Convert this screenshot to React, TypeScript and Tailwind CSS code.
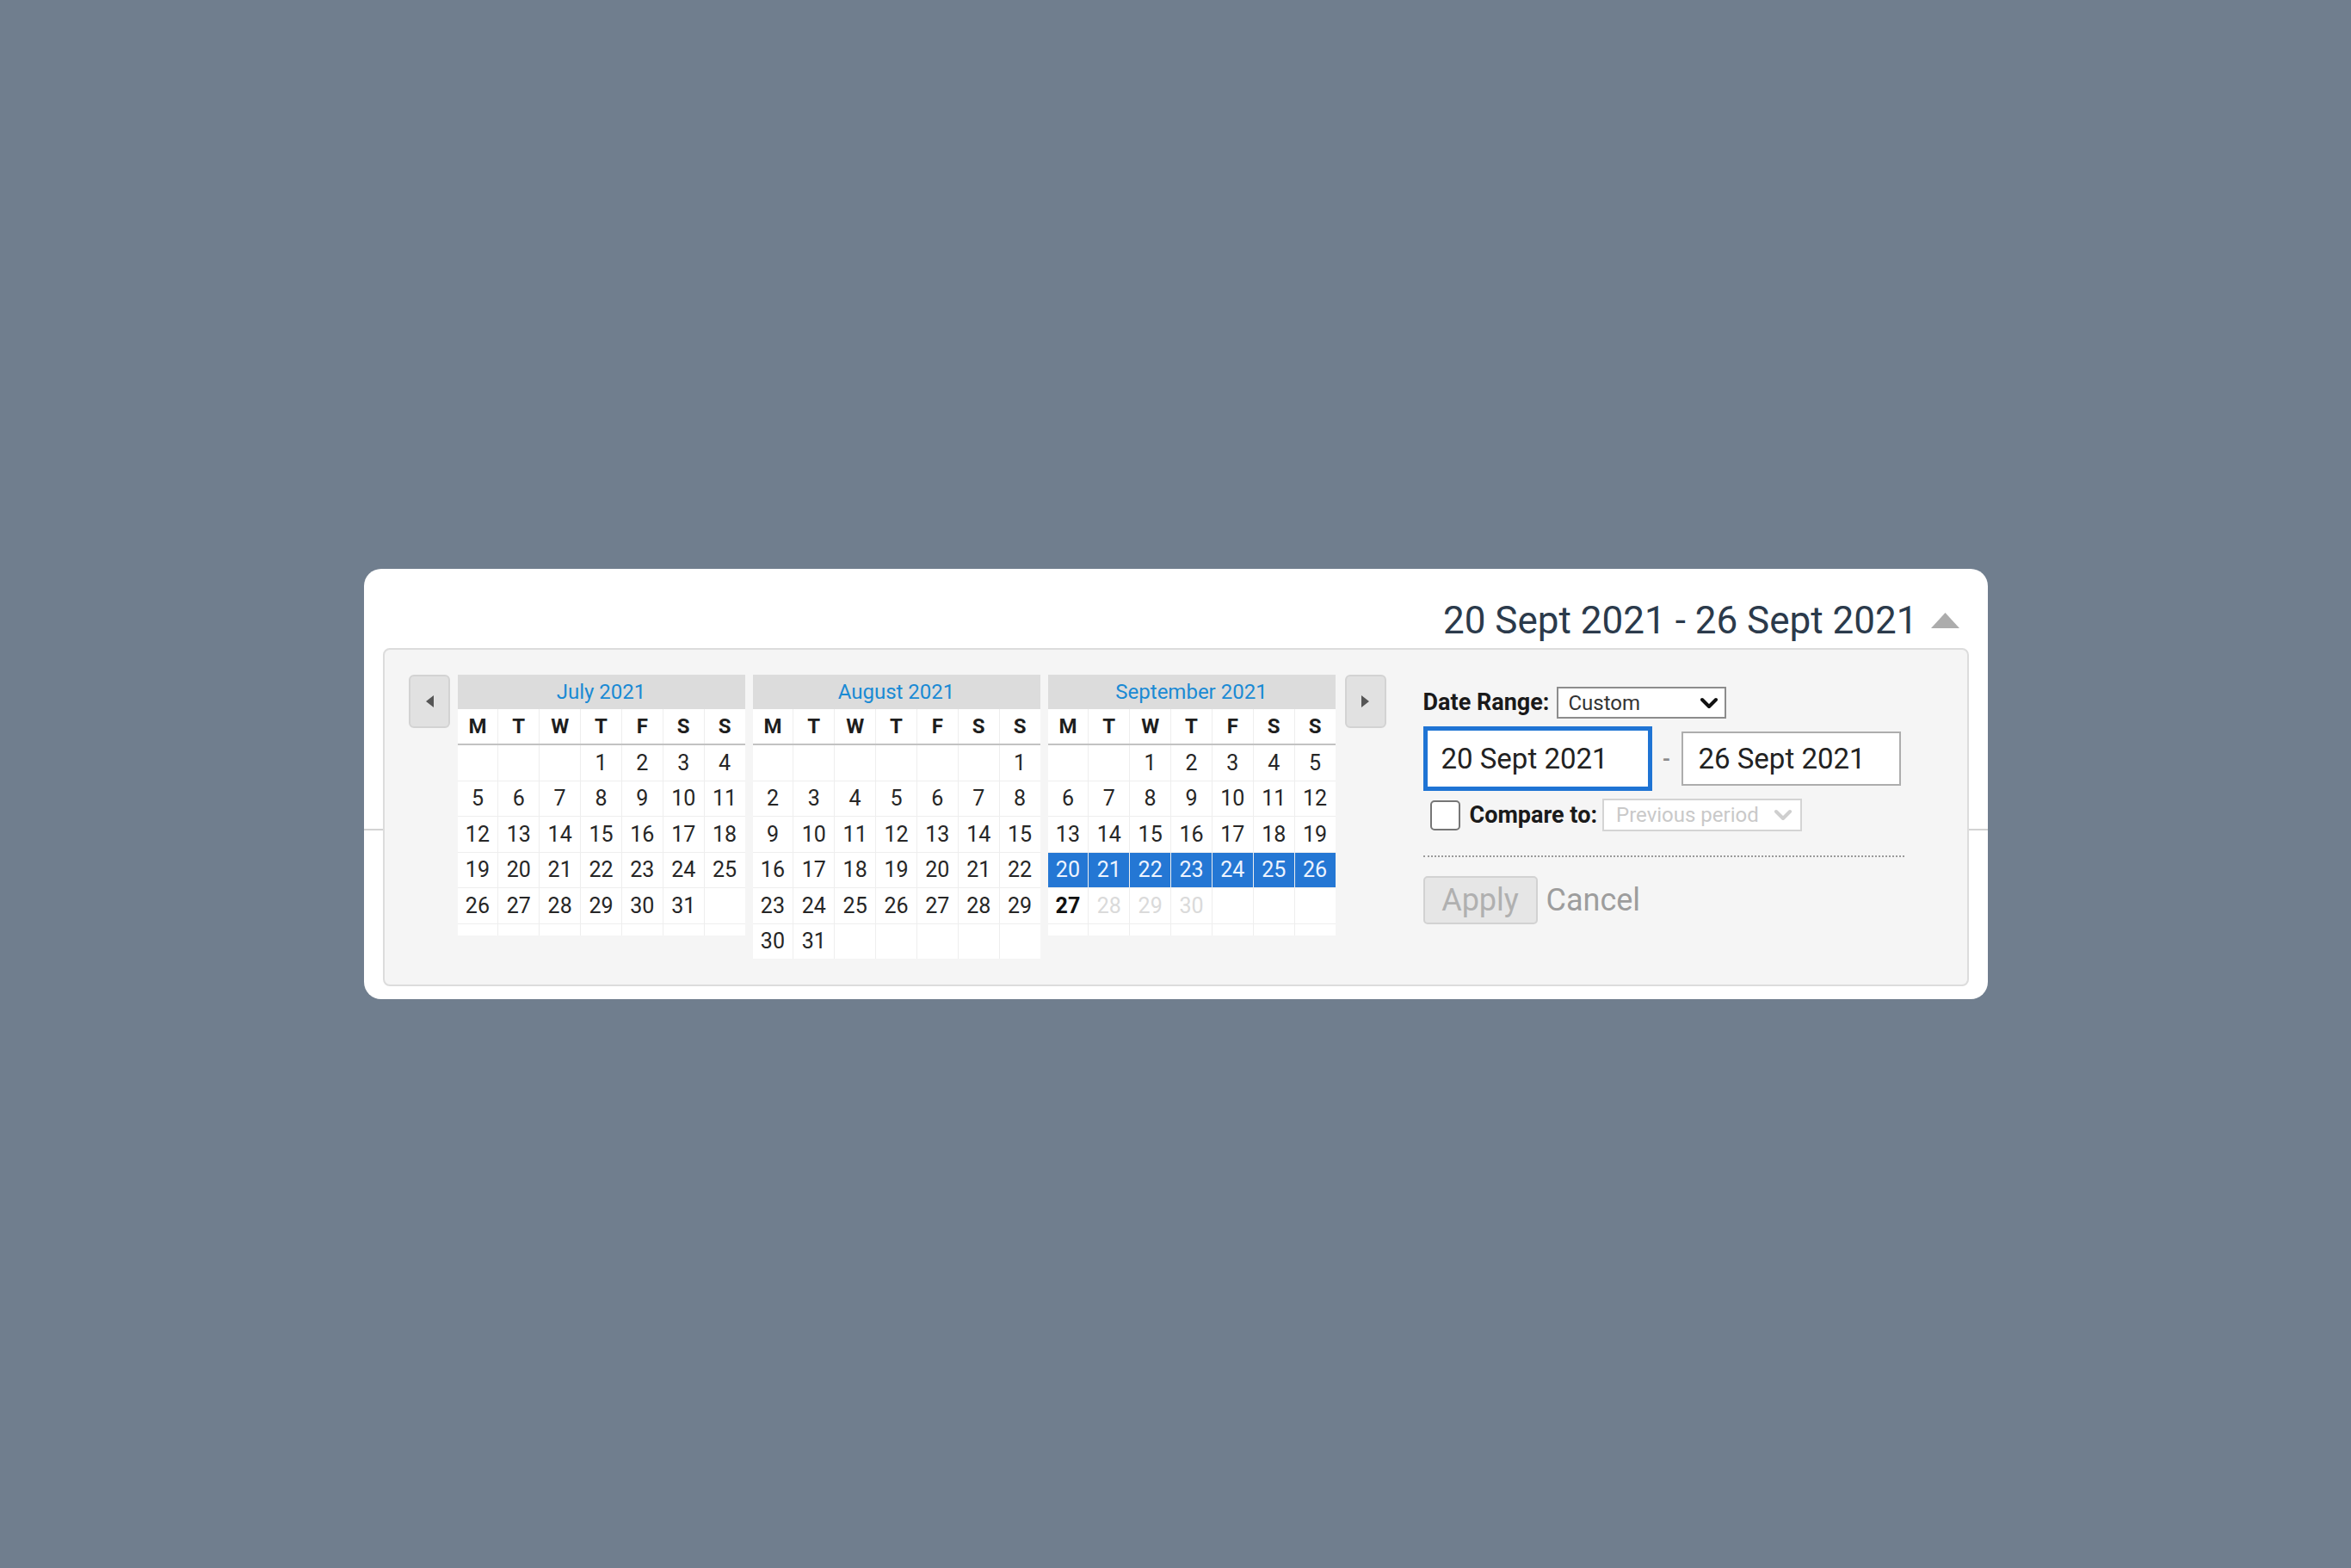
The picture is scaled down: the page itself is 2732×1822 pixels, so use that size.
import type { ReactNode } from 'react';

// Date range picker: three months side by side plus the range form on the right.

interface MonthSpec {
  title: string;
  offset: number; // 0 = Monday
  days: number;
  selected?: [number, number];
  today?: number;
  disabledFrom?: number;
}

const MONTHS: MonthSpec[] = [
  { title: 'July 2021', offset: 3, days: 31 },
  { title: 'August 2021', offset: 6, days: 31 },
  { title: 'September 2021', offset: 2, days: 30, selected: [20, 26], today: 27, disabledFrom: 28 },
];

const WEEKDAYS = ['M', 'T', 'W', 'T', 'F', 'S', 'S'];

function NavButton({ dir }: { dir: 'prev' | 'next' }) {
  return (
    <div className="w-[48px] h-[62px] shrink-0 flex items-center justify-center bg-[#e1e1e1] border-2 border-[#d3d3d3] rounded-[6px]">
      <svg width="12" height="16" viewBox="0 0 12 16">
        {dir === 'prev' ? (
          <polygon points="11,1 11,15 2,8" fill="#555" />
        ) : (
          <polygon points="1,1 1,15 10,8" fill="#555" />
        )}
      </svg>
    </div>
  );
}

function dayClass(m: MonthSpec, d: number): string {
  if (m.selected && d >= m.selected[0] && d <= m.selected[1]) return 'bg-[#2477d4] text-[#eef4ff]';
  if (m.today === d) return 'bg-white text-[#111] font-bold';
  if (m.disabledFrom !== undefined && d >= m.disabledFrom) return 'bg-white text-[#dadada]';
  return 'bg-white text-[#262626]';
}

function MonthGrid({ month }: { month: MonthSpec }) {
  const weeks = Math.ceil((month.offset + month.days) / 7);
  const cells: (number | null)[] = [];
  for (let i = 0; i < weeks * 7; i++) {
    const d = i - month.offset + 1;
    cells.push(d >= 1 && d <= month.days ? d : null);
  }
  return (
    <div className="w-[334px] shrink-0 flex flex-col">
      <div className="h-[40px] bg-[#dcdcdc] flex items-center justify-center text-[24px] text-[#1a8ad4]">
        {month.title}
      </div>
      <div className="grid grid-cols-7 gap-x-px bg-[#eeeeee]">
        {WEEKDAYS.map((w, i) => (
          <div key={i} className="h-[40px] bg-white flex items-center justify-center text-[24px] font-bold text-[#1e1e1e]">
            {w}
          </div>
        ))}
      </div>
      <div className="h-[2px] bg-[#c2c2c2]" />
      <div className="grid grid-cols-7 gap-px bg-[#eeeeee]">
        {cells.map((d, i) => (
          <div
            key={i}
            className={`h-[40.5px] flex items-center justify-center text-[25px] ${d === null ? 'bg-white' : dayClass(month, d)}`}
          >
            {d ?? ''}
          </div>
        ))}
        {weeks < 6 &&
          WEEKDAYS.map((_, i) => <div key={`pad-${i}`} className="h-[13px] bg-white" />)}
      </div>
    </div>
  );
}

function Chevron({ color }: { color: string }) {
  return (
    <svg width="20" height="14" viewBox="0 0 20 14">
      <polyline points="2,3 10,11 18,3" fill="none" stroke={color} strokeWidth="4" strokeLinecap="round" strokeLinejoin="round" />
    </svg>
  );
}

function Field({ className, children }: { className: string; children: ReactNode }) {
  return <div className={`bg-white flex items-center shrink-0 ${className}`}>{children}</div>;
}

function RangeForm() {
  return (
    <div className="ml-[43px] mt-[14px] w-[559px] flex flex-col">
      <div className="flex items-center h-[37px]">
        <span className="text-[27px] font-bold text-[#1a1a1a]">Date Range:</span>
        <Field className="ml-[9px] w-[197px] h-[37px] border-2 border-[#8c8c8c] justify-between pl-[11px] pr-[8px]">
          <span className="text-[24px] text-[#333]">Custom</span>
          <Chevron color="#111" />
        </Field>
      </div>
      <div className="mt-[9px] flex items-center">
        <Field className="w-[266px] h-[75px] border-[5px] border-[#1f74d4] pl-[16px]">
          <span className="text-[33px] text-[#222]">20 Sept 2021</span>
        </Field>
        <span className="w-[34px] text-center text-[24px] font-bold text-[#8a8a8a]">-</span>
        <Field className="w-[255px] h-[63px] border-2 border-[#adadad] pl-[18px]">
          <span className="text-[33px] text-[#222]">26 Sept 2021</span>
        </Field>
      </div>
      <div className="mt-[9px] flex items-center h-[38px]">
        <div className="ml-[8px] w-[35px] h-[35px] bg-white border-2 border-[#767676] rounded-[5px] shrink-0" />
        <span className="ml-[11px] text-[27px] font-bold text-[#1a1a1a]">Compare to:</span>
        <Field className="ml-[6px] w-[232px] h-[38px] border-2 border-[#d4d4d4] justify-between pl-[14px] pr-[10px]">
          <span className="text-[24px] text-[#c9c9c9]">Previous period</span>
          <Chevron color="#cfcfcf" />
        </Field>
      </div>
      <div className="mt-[28px] border-t-2 border-dotted border-[#9a9a9a]" />
      <div className="mt-[22px] flex items-center">
        <div className="w-[133px] h-[56px] flex items-center justify-center bg-[#e6e6e6] border-2 border-[#d2d2d2] rounded-[5px] text-[36px] text-[#b0b0b0]">
          Apply
        </div>
        <span className="ml-[10px] text-[36px] text-[#9d9d9d]">Cancel</span>
      </div>
    </div>
  );
}

export default function App() {
  return (
    <div className="min-h-screen bg-[#707e8e] flex items-center justify-center font-[Roboto,sans-serif]">
      <div className="relative w-[1887px] h-[500px] bg-white rounded-[20px] px-[22px] pt-[38px] flex flex-col">
        <div className="absolute left-0 right-0 top-[302px] h-[2px] bg-[#d3d3d3]" />
        <div className="flex items-center justify-end pr-[10px] h-[44px]">
          <span className="text-[44px] leading-none text-[#2b3a4b]">20 Sept 2021 - 26 Sept 2021</span>
          <svg className="ml-[14px]" width="35" height="20" viewBox="0 0 35 20">
            <polygon points="17.5,1 34,19 1,19" fill="#acacac" />
          </svg>
        </div>
        <div className="relative mt-[10px] h-[393px] bg-[#f5f5f5] border-2 border-[#dcdcdc] rounded-[8px] pl-[28px] pt-[29px] flex items-start">
          <NavButton dir="prev" />
          <div className="ml-[9px] flex gap-[9px]">
            {MONTHS.map((m) => (
              <MonthGrid key={m.title} month={m} />
            ))}
          </div>
          <div className="ml-[11px]">
            <NavButton dir="next" />
          </div>
          <RangeForm />
        </div>
      </div>
    </div>
  );
}
